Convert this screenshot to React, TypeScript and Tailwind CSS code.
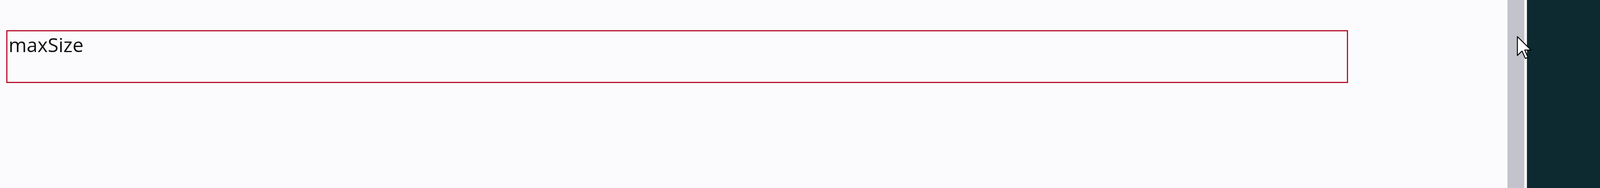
export default function App() {
  return (
    <div className="relative flex h-screen w-full overflow-hidden bg-[#fbfbfd]">
      {/* page content */}
      <div className="min-w-0 flex-1 pl-[16px] pr-[408px] pt-[77px]">
        <div className="h-[135px] w-full border-[3px] border-[#b8122c] px-[3px]">
          <span className="text-[50px] leading-[68px] text-[#111111] [font-family:'Open_Sans',sans-serif]">
            maxSize
          </span>
        </div>
      </div>

      {/* scrollbar */}
      <div className="h-full w-[43px] shrink-0 bg-[#c3c3cd]" />
      <div className="h-full w-[7px] shrink-0 bg-[#f4f4f6]" />

      {/* desktop behind window */}
      <div className="h-full w-[187px] shrink-0 bg-[#0d2a30]" />

      {/* mouse cursor */}
      <svg
        className="absolute right-[174px] top-[92px]"
        width="39"
        height="60"
        viewBox="-0.5 -0.5 13 20"
      >
        <path
          d="M0 0 L0 16 L4 12.3 L6.8 18.6 L9 17.6 L6.3 11.4 L11.6 11.4 Z"
          fill="#ffffff"
          stroke="#000000"
          strokeWidth="0.8"
          strokeLinejoin="round"
        />
      </svg>
    </div>
  );
}
